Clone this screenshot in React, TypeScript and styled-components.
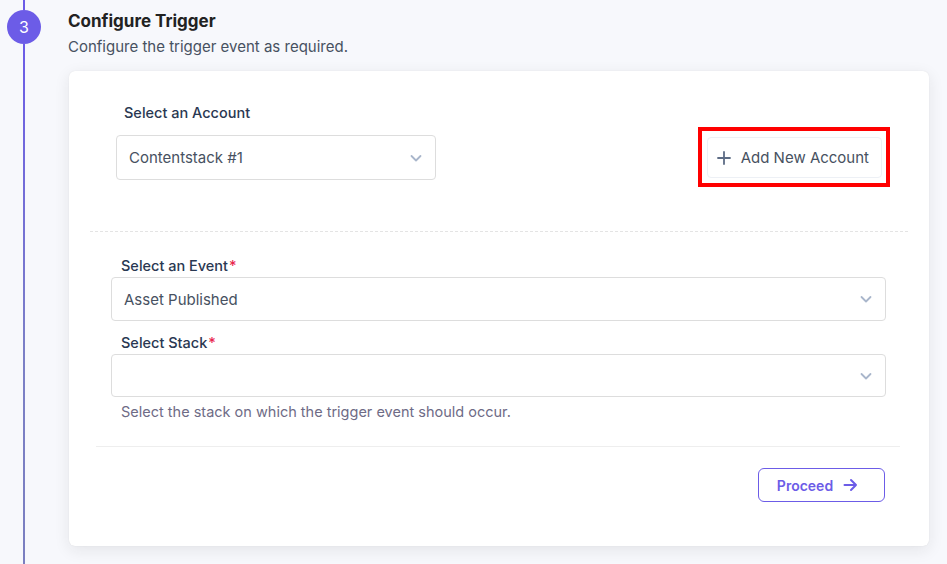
import React from "react";
import styled, { createGlobalStyle } from "styled-components";

const Global = createGlobalStyle`
  html, body { margin: 0; padding: 0; }
  body {
    background: #f7f8fc;
    font-family: Inter, "Noto Sans", sans-serif;
    -webkit-font-smoothing: antialiased;
  }
  #root { height: 564px; }
`;

const Page = styled.div`
  display: flex;
  height: 564px;
  width: 947px;
  box-sizing: border-box;
  background: #f7f8fc;
`;

const Timeline = styled.div`
  width: 48px;
  flex: none;
  display: flex;
  flex-direction: column;
  align-items: center;
`;

const LineSegment = styled.div<{ $grow?: boolean; $h?: number }>`
  width: 2px;
  margin-left: -1px;
  ${(p) => (p.$grow ? "flex: 1;" : `height: ${p.$h}px;`)}
  background: ${(p) =>
    p.$grow ? "linear-gradient(#6c5ce7, #7c80c6 60%, #7b7fc0)" : "#6c5ce7"};
`;

const StepCircle = styled.div`
  width: 34px;
  height: 34px;
  border-radius: 50%;
  background: #6c5ce7;
  color: #fff;
  font-size: 16px;
  display: flex;
  align-items: center;
  justify-content: center;
  flex: none;
`;

const Content = styled.div`
  flex: 1;
  display: flex;
  flex-direction: column;
  padding: 10px 18px 18px 20px;
  min-width: 0;
`;

const Title = styled.h2`
  margin: 0;
  font-size: 17px;
  line-height: 22px;
  font-weight: 700;
  color: #222222;
`;

const Subtitle = styled.p`
  margin: 4px 0 0;
  font-size: 15px;
  line-height: 22px;
  color: #475161;
`;

const Card = styled.div`
  margin-top: 13px;
  margin-left: 1px;
  flex: 1;
  background: #fff;
  border-radius: 6px;
  box-shadow: 0 4px 16px rgba(34, 34, 34, 0.09), 0 0 1px rgba(34, 34, 34, 0.12);
  display: flex;
  flex-direction: column;
`;

const AccountSection = styled.div`
  padding: 32px 0 0;
  margin: 0 21px 0 21px;
  height: 161px;
  box-sizing: border-box;
  border-bottom: 1px dashed #e4e4e4;
`;

const AccountRow = styled.div`
  display: flex;
  align-items: flex-end;
  justify-content: space-between;
  padding: 0 18px 0 26px;
`;

const AccountField = styled.div`
  display: flex;
  flex-direction: column;
  width: 320px;
`;

const Label = styled.label<{ $indent: number }>`
  display: block;
  font-size: 14.5px;
  line-height: 20px;
  font-weight: 500;
  color: #2a3852;
  padding-left: ${(p) => p.$indent}px;
`;

const Star = styled.span`
  color: #e8254d;
  margin-left: 1px;
`;

const SelectBox = styled.div<{ $h: number; $mt: number }>`
  margin-top: ${(p) => p.$mt}px;
  height: ${(p) => p.$h}px;
  box-sizing: border-box;
  border: 1px solid #dddddd;
  border-radius: 4px;
  background: #fff;
  display: flex;
  align-items: center;
  justify-content: space-between;
  padding: 0 12px 0 12px;
  font-size: 15px;
  color: #475161;
`;

const Chevron = () => (
  <svg width="14" height="14" viewBox="0 0 14 14" fill="none">
    <path d="M2.5 5l4.5 4.5L11.5 5" stroke="#a9b6cb" strokeWidth="1.8" strokeLinecap="round" strokeLinejoin="round" />
  </svg>
);

const Highlight = styled.div`
  border: 4px solid #ff0000;
  padding: 6px 4px 5px 5px;
  margin-bottom: -7px;
`;

const GhostButton = styled.button`
  height: 41px;
  box-sizing: border-box;
  border: 1px solid #edf0f5;
  border-radius: 4px;
  background: #fff;
  display: flex;
  align-items: center;
  gap: 10px;
  padding: 0 12px 0 9px;
  font-family: inherit;
  font-size: 15px;
  color: #475161;
  cursor: pointer;
`;

const PlusIcon = () => (
  <svg width="14" height="14" viewBox="0 0 14 14" fill="none">
    <path d="M7 1v12M1 7h12" stroke="#5d6c85" strokeWidth="1.8" strokeLinecap="round" />
  </svg>
);

const EventSection = styled.div`
  padding: 24px 43px 0 42px;
  display: flex;
  flex-direction: column;
`;

const FieldGap = styled.div`
  height: 12px;
`;

const Helper = styled.p`
  margin: 5px 0 0;
  padding-left: 10px;
  font-size: 14.5px;
  line-height: 20px;
  color: #6e6b86;
`;

const Footer = styled.div`
  margin: 24px 29px 0 27px;
  border-top: 1px solid #eeeeee;
  padding-top: 21px;
  display: flex;
  justify-content: flex-end;
`;

const ProceedButton = styled.button`
  width: 127px;
  height: 34px;
  box-sizing: border-box;
  margin-right: 15px;
  border: 1px solid #6c5ce7;
  border-radius: 6px;
  background: #fff;
  color: #6c5ce7;
  font-family: inherit;
  font-weight: 600;
  font-size: 14px;
  display: flex;
  align-items: center;
  justify-content: center;
  gap: 10px;
  padding: 0 8px 0 0;
  cursor: pointer;
`;

const Arrow = () => (
  <svg width="15" height="14" viewBox="0 0 15 14" fill="none">
    <path d="M1.5 7h11.5M8 2l5 5-5 5" stroke="#6c5ce7" strokeWidth="2" strokeLinecap="round" strokeLinejoin="round" />
  </svg>
);

export default function App() {
  return (
    <>
      <Global />
      <Page>
        <Timeline>
          <LineSegment $h={10} />
          <StepCircle>3</StepCircle>
          <LineSegment $grow />
        </Timeline>
        <Content>
          <Title>Configure Trigger</Title>
          <Subtitle>Configure the trigger event as required.</Subtitle>
          <Card>
            <AccountSection>
              <AccountRow>
                <AccountField>
                  <Label $indent={8}>Select an Account</Label>
                  <SelectBox $h={45} $mt={12}>
                    <span>Contentstack #1</span>
                    <Chevron />
                  </SelectBox>
                </AccountField>
                <Highlight>
                  <GhostButton>
                    <PlusIcon />
                    Add New Account
                  </GhostButton>
                </Highlight>
              </AccountRow>
            </AccountSection>
            <EventSection>
              <Label $indent={10}>
                Select an Event<Star>*</Star>
              </Label>
              <SelectBox $h={44} $mt={1}>
                <span>Asset Published</span>
                <Chevron />
              </SelectBox>
              <FieldGap />
              <Label $indent={10}>
                Select Stack<Star>*</Star>
              </Label>
              <SelectBox $h={43} $mt={1}>
                <span />
                <Chevron />
              </SelectBox>
              <Helper>Select the stack on which the trigger event should occur.</Helper>
            </EventSection>
            <Footer>
              <ProceedButton>
                Proceed
                <Arrow />
              </ProceedButton>
            </Footer>
          </Card>
        </Content>
      </Page>
    </>
  );
}
